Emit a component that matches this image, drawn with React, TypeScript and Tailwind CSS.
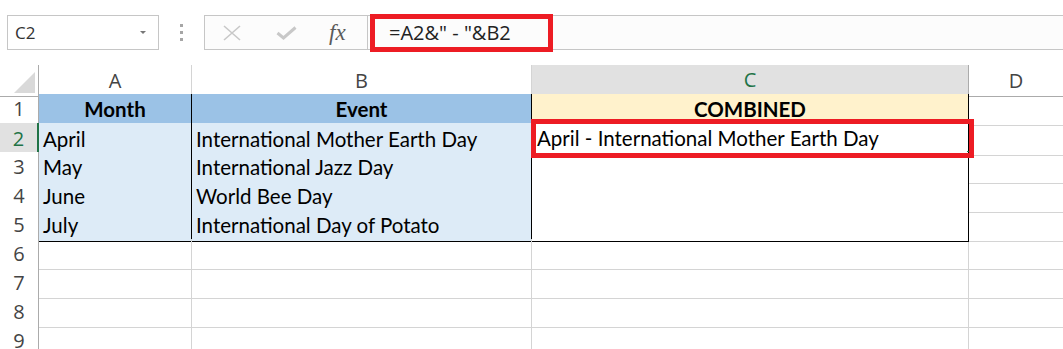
import React from "react";

const cellFont = { fontFamily: "Lato, 'Liberation Sans', sans-serif" };
const uiFont = { fontFamily: "'Open Sans', 'Noto Sans', sans-serif" };

const COLS = "grid grid-cols-[39px_153px_340px_437px_1fr]";

type Row = { month: string; event: string; combined: string };

const rows: Row[] = [
  { month: "April", event: "International Mother Earth Day", combined: "April - International Mother Earth Day" },
  { month: "May", event: "International Jazz Day", combined: "" },
  { month: "June", event: "World Bee Day", combined: "" },
  { month: "July", event: "International Day of Potato", combined: "" },
];

function RowHead({ n, active }: { n: number; active?: boolean }) {
  return (
    <div
      className={
        "flex items-center justify-center border-b border-[#d4d4d4] text-[20px] " +
        (active
          ? "bg-[#e1e1e1] text-[#217346] border-r-2 border-r-[#217346]"
          : "bg-white text-[#444] border-r border-r-[#ababab]")
      }
      style={uiFont}
    >
      {n}
    </div>
  );
}

function Toolbar() {
  return (
    <div className="relative flex h-[65px] items-start pt-[15px] bg-white" style={uiFont}>
      <div className="ml-[7px] flex h-[35px] w-[152px] items-center justify-between border border-[#c6c6c6] bg-white pl-[7px] pr-[12px]">
        <span className="text-[17px] text-[#333]">C2</span>
        <span className="h-0 w-0 border-l-[3px] border-r-[3px] border-t-[3px] border-l-transparent border-r-transparent border-t-[#777]" />
      </div>
      <div className="flex h-[35px] w-[45px] flex-col items-center justify-center gap-[4px]">
        <span className="h-[3px] w-[3px] bg-[#a6a6a6]" />
        <span className="h-[3px] w-[3px] bg-[#a6a6a6]" />
        <span className="h-[3px] w-[3px] bg-[#a6a6a6]" />
      </div>
      <div className="flex h-[35px] flex-1 border-y border-l border-[#c6c6c6] bg-[#fcfcfc]">
        <div className="flex w-[163px] items-center border-r border-[#c6c6c6]">
          <svg width="18" height="16" viewBox="0 0 18 16" className="ml-[18px]">
            <path d="M1 1 L17 15 M17 1 L1 15" stroke="#c8c8c8" strokeWidth="1.6" fill="none" />
          </svg>
          <svg width="21" height="14" viewBox="0 0 21 14" className="ml-[35px]">
            <path d="M1.5 7 L7.5 12 L19.5 1.5" stroke="#c8c8c8" strokeWidth="3" fill="none" />
          </svg>
          <span
            className="ml-[32px] text-[23px] italic leading-none text-[#5a5a5a]"
            style={{ fontFamily: "'Liberation Serif', serif" }}
          >
            fx
          </span>
        </div>
        <div className="flex items-center pl-[21px] text-[20px] text-[#222]">=A2&amp;" - "&amp;B2</div>
      </div>
      {/* annotation box round the formula */}
      <div className="absolute left-[370px] top-[14px] h-[38px] w-[183px] border-[5px] border-[#ed1c24]" />
    </div>
  );
}

export default function App() {
  return (
    <div className="relative h-[349px] w-[1063px] overflow-hidden bg-white">
      <Toolbar />

      {/* column headers */}
      <div className={COLS + " h-[29px]"} style={uiFont}>
        <div className="relative border-b border-r border-[#ababab] bg-white">
          <div className="absolute bottom-[3px] right-[3px] h-0 w-0 border-b-[21px] border-l-[21px] border-b-[#d9d9d9] border-l-transparent" />
        </div>
        <div className="flex items-center justify-center border-b border-r border-b-[#ababab] border-r-[#d4d4d4] text-[20px] text-[#444]">A</div>
        <div className="flex items-center justify-center border-b border-r border-b-[#ababab] border-r-[#d4d4d4] text-[20px] text-[#444]">B</div>
        <div className="flex items-center justify-center border-b-2 border-r border-b-[#217346] border-r-[#ababab] bg-[#e1e1e1] text-[20px] text-[#217346]">C</div>
        <div className="flex items-center justify-center border-b border-b-[#ababab] text-[20px] text-[#444]">D</div>
      </div>

      {/* row 1: header of the table */}
      <div className={COLS + " h-[29px]"} style={cellFont}>
        <RowHead n={1} />
        <div className="flex items-center justify-center border-b border-r border-black bg-[#9bc2e6] text-[20.5px] font-bold text-black">Month</div>
        <div className="flex items-center justify-center border-b border-r border-black bg-[#9bc2e6] text-[20.5px] font-bold text-black">Event</div>
        <div className="flex items-center justify-center border-b border-r border-black bg-[#fff2cc] text-[20.5px] font-bold text-black">COMBINED</div>
        <div className="border-b border-[#d4d4d4]" />
      </div>

      {rows.map((r, i) => (
        <div key={r.month} className={COLS + " h-[29px]"} style={cellFont}>
          <RowHead n={i + 2} active={i === 0} />
          <div className="flex items-center border-b border-r border-black bg-[#ddebf7] pl-[4px] text-[20.5px] text-black">{r.month}</div>
          <div className="flex items-center border-b border-r border-black bg-[#ddebf7] pl-[4px] text-[20.5px] text-black">{r.event}</div>
          <div
            className={
              "relative flex items-center border-r border-black bg-white pl-[5px] text-[20.5px] text-black " +
              (i === 0 ? "border-b-2 border-b-[#217346]" : "border-b")
            }
          >
            {r.combined}
            {i === 0 && <div className="absolute -bottom-[2px] -right-[4px] h-[5px] w-[5px] bg-[#217346]" />}
          </div>
          <div className="border-b border-[#d4d4d4]" />
        </div>
      ))}

      {[6, 7, 8, 9].map((n) => (
        <div key={n} className={COLS + " h-[29px]"}>
          <RowHead n={n} />
          <div className="border-b border-r border-[#d4d4d4]" />
          <div className="border-b border-r border-[#d4d4d4]" />
          <div className="border-b border-r border-[#d4d4d4]" />
          <div className="border-b border-[#d4d4d4]" />
        </div>
      ))}

      {/* annotation box round C2 */}
      <div className="absolute left-[531px] top-[119px] h-[39px] w-[443px] border-[5px] border-[#ed1c24]" />
    </div>
  );
}
